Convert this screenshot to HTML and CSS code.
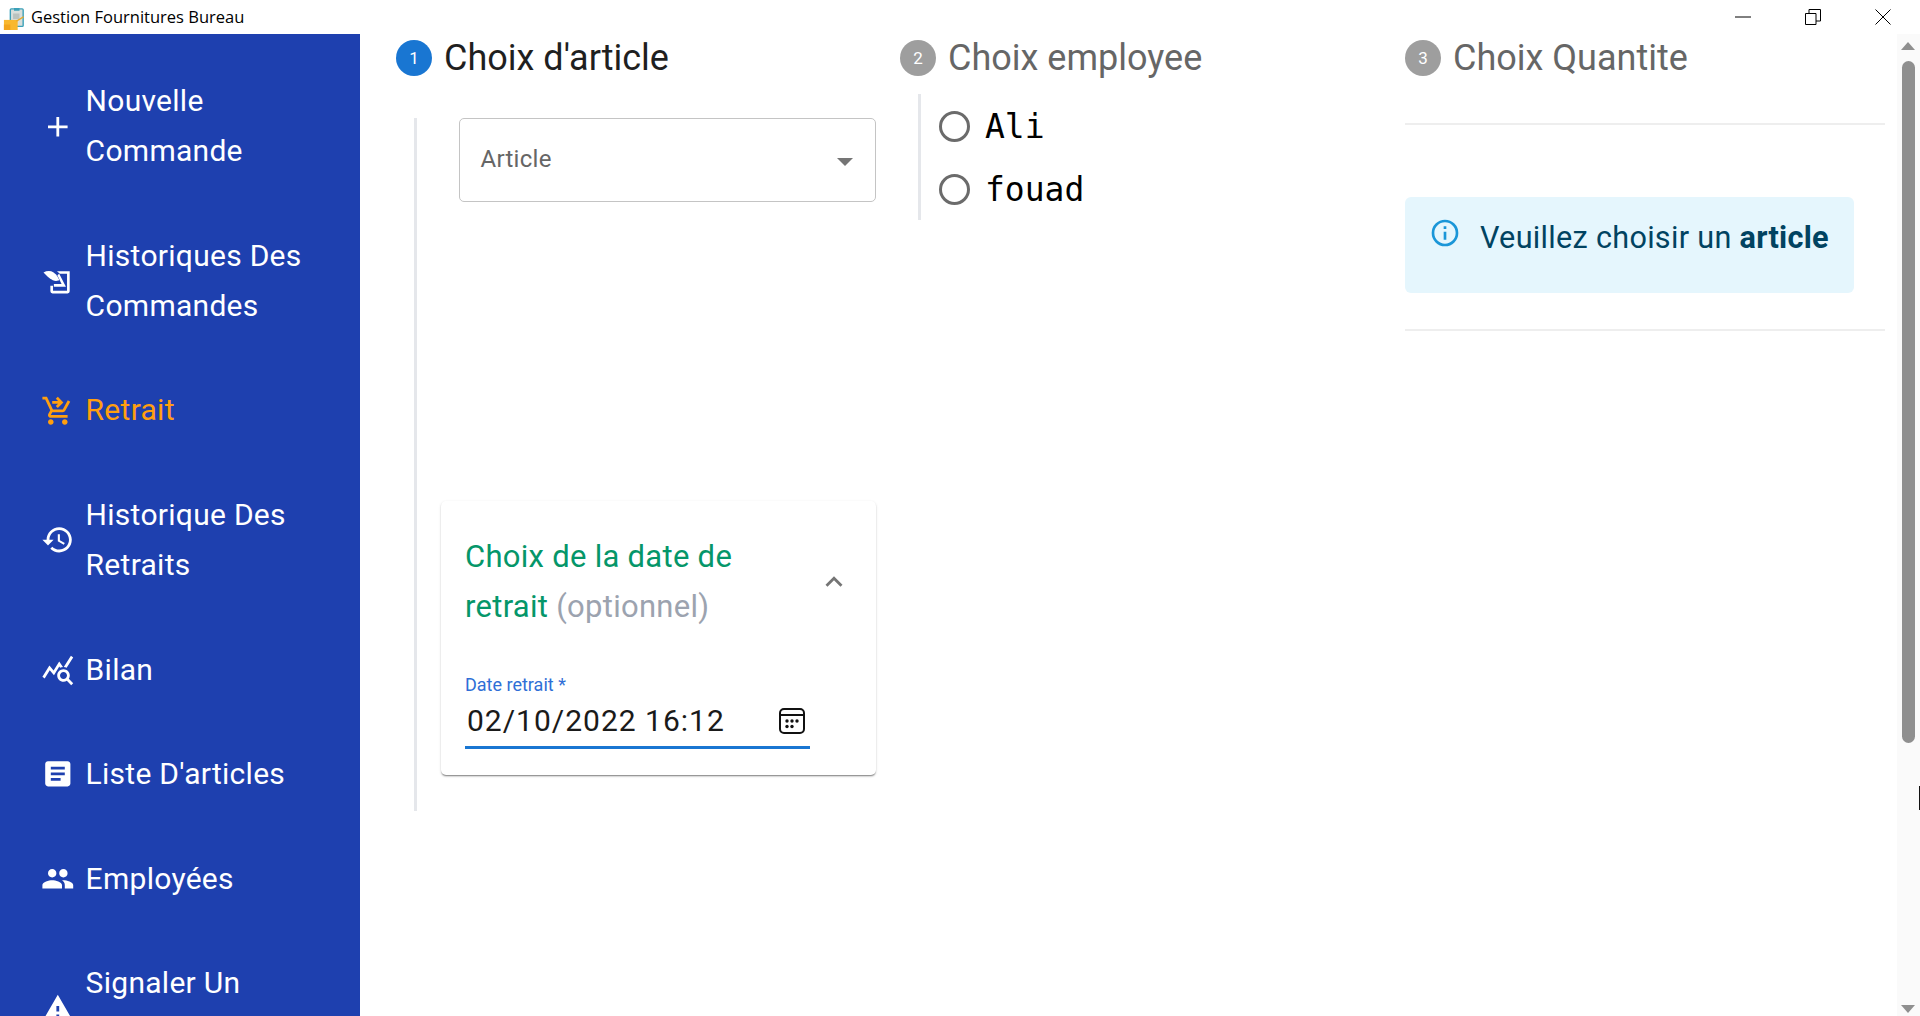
FILE: index.html
```html
<!DOCTYPE html>
<html lang="fr">
<head>
    <meta charset="UTF-8">
    <title>Gestion Fournitures Bureau</title>
    <link rel="stylesheet" href="styles.css">
</head>
<body>
    <header class="titlebar">
        <svg class="app-icon" viewBox="0 0 24 24">
            <rect x="8" y="1" width="14" height="19" rx="1" fill="#d8dedb" stroke="#3aa0b8" stroke-width="1.5"/>
            <rect x="12" y="0" width="6" height="3" fill="#3aa0b8"/>
            <rect x="11" y="6" width="7" height="6" fill="#b9c2bf"/>
            <rect x="1" y="13" width="15" height="11" fill="#f9b82e"/>
            <rect x="1" y="18" width="7" height="6" fill="#f3a51c"/>
            <path d="M14 14l8-5 1 1-8 5z" fill="#e8a928"/>
        </svg>
        <span class="app-title">Gestion Fournitures Bureau</span>
        <div class="win-controls">
            <svg width="16" height="16" viewBox="0 0 16 16"><path d="M0 8h16" stroke="#000" fill="none"/></svg>
            <svg width="16" height="16" viewBox="0 0 16 16"><path d="M.5 4.5h10.500v11H.5zM4 4.500V.5h11.500V12H11" stroke="#000" fill="none"/></svg>
            <svg width="16" height="16" viewBox="0 0 16 16"><path d="M.5.5l15 15M15.500.5l-15 15" stroke="#000" fill="none"/></svg>
        </div>
    </header>

    <div class="app">
        <nav class="sidebar">
            <a class="nav-item">
                <svg class="nav-icon" viewBox="0 0 24 24"><path d="M19 13h-6v6h-2v-6H5v-2h6V5h2v6h6v2z"/></svg>
                <span>Nouvelle Commande</span>
            </a>
            <a class="nav-item">
                <svg class="nav-icon" viewBox="0 0 24 24"><path d="M11.400 5.100h9.100v14.400q0 1.500-1.500 1.500H8.200q-1.500 0-1.500-1.500V15.500h1.900v3.600h10V7h-5.100z"/><path d="M1.800 6C5.500 3.900 9.500 5 11.800 9l1.400 2.600-2.500.6C7.800 11.800 4.500 9 1.800 6z"/><path d="M13 7l4.800 9.200H9.200v-1.900h5.500l-3-6.300z"/></svg>
                <span>Historiques Des Commandes</span>
            </a>
            <a class="nav-item active">
                <svg class="nav-icon" viewBox="0 0 24 24"><path d="M15.550 13c.75 0 1.410-.41 1.750-1.030l3.580-6.490-1.740-.96L15.550 11H8.530L4.270 2H1v2h2l3.600 7.590-1.350 2.440C4.520 15.370 5.480 17 7 17h12v-2H7l1.100-2h7.450zM7 18c-1.100 0-1.990.9-1.990 2S5.900 22 7 22s2-.9 2-2-.9-2-2-2zm10 0c-1.100 0-1.990.9-1.990 2s.89 2 1.990 2 2-.9 2-2-.9-2-2-2z"/><path d="M12 2l-1.410 1.410L12.170 5H8v2h4.170l-1.580 1.590L12 10l4-4-4-4z"/></svg>
                <span>Retrait</span>
            </a>
            <a class="nav-item">
                <svg class="nav-icon" viewBox="0 0 24 24"><path d="M13 3c-4.970 0-9 4.030-9 9H1l3.890 3.890.07.14L9 12H6c0-3.870 3.130-7 7-7s7 3.130 7 7-3.130 7-7 7c-1.930 0-3.680-.79-4.940-2.060l-1.420 1.420C8.270 19.990 10.510 21 13 21c4.970 0 9-4.030 9-9s-4.030-9-9-9zm-1 5v5l4.280 2.540.72-1.210-3.500-2.080V8H12z"/></svg>
                <span>Historique Des Retraits</span>
            </a>
            <a class="nav-item">
                <svg class="nav-icon" viewBox="0 0 24 24"><path d="M19.880 18.470c.44-.7.7-1.510.7-2.390 0-2.490-2.010-4.500-4.500-4.500s-4.500 2.010-4.500 4.500 2.010 4.500 4.490 4.500c.88 0 1.700-.26 2.390-.7L21.580 23 23 21.580l-3.120-3.110zm-3.800.11c-1.380 0-2.500-1.120-2.500-2.500s1.120-2.500 2.500-2.500 2.500 1.120 2.500 2.500-1.120 2.500-2.500 2.500zm-.36-8.500c-.74.02-1.450.18-2.100.45l-.55-.83-3.800 6.180-3.010-3.520-3.630 5.810L1 17l5-8 3 3.500L13 6l2.720 4.080zm2.590.5c-.64-.28-1.330-.45-2.050-.49L21.380 2 23 3.180l-4.690 7.400z"/></svg>
                <span>Bilan</span>
            </a>
            <a class="nav-item">
                <svg class="nav-icon" viewBox="0 0 24 24"><path d="M19 3H5c-1.100 0-2 .9-2 2v14c0 1.100.9 2 2 2h14c1.100 0 2-.9 2-2V5c0-1.100-.9-2-2-2zm-5 14H7v-2h7v2zm3-4H7v-2h10v2zm0-4H7V7h10v2z"/></svg>
                <span>Liste D'articles</span>
            </a>
            <a class="nav-item">
                <svg class="nav-icon" viewBox="0 0 24 24"><path d="M16 11c1.660 0 2.990-1.340 2.990-3S17.660 5 16 5c-1.660 0-3 1.340-3 3s1.340 3 3 3zm-8 0c1.660 0 2.990-1.340 2.990-3S9.660 5 8 5C6.340 5 5 6.340 5 8s1.340 3 3 3zm0 2c-2.330 0-7 1.170-7 3.500V19h14v-2.500c0-2.330-4.670-3.500-7-3.500zm8 0c-.29 0-.62.02-.97.05 1.160.84 1.970 1.970 1.970 3.450V19h6v-2.500c0-2.330-4.670-3.500-7-3.500z"/></svg>
                <span>Employées</span>
            </a>
            <a class="nav-item">
                <svg class="nav-icon" viewBox="0 0 24 24"><path d="M1 21h22L12 2 1 21zm12-3h-2v-2h2v2zm0-4h-2v-4h2v4z"/></svg>
                <span>Signaler Un Problème</span>
            </a>
        </nav>

        <main class="steps">
            <section class="step">
                <div class="step-head">
                    <span class="step-num current">1</span>
                    <h2 class="step-title current">Choix d'article</h2>
                </div>
                <div class="step-body article-body">
                    <div class="select">
                        <span class="select-text">Article</span>
                        <span class="select-arrow"></span>
                    </div>
                    <div class="card">
                        <div class="card-head">
                            <div class="card-title">Choix de la date de retrait <span class="optional">(optionnel)</span></div>
                            <svg class="chevron" viewBox="0 0 24 24"><path d="M12 8l-6 6 1.410 1.410L12 10.830l4.590 4.580L18 14z"/></svg>
                        </div>
                        <div class="date-field">
                            <label class="date-label">Date retrait *</label>
                            <div class="date-input">
                                <span>02/10/2022 16:12</span>
                                <svg class="calendar" viewBox="0 0 26 26" fill="none" stroke="#111" stroke-width="2">
                                    <rect x="1" y="1" width="24" height="24" rx="4"/>
                                    <path d="M1 7h24"/>
                                    <g fill="#111" stroke="none">
                                        <circle cx="8" cy="13" r="1.700"/><circle cx="13" cy="13" r="1.700"/><circle cx="18" cy="13" r="1.700"/>
                                        <circle cx="8" cy="18.500" r="1.700"/><circle cx="13" cy="18.500" r="1.700"/>
                                    </g>
                                </svg>
                            </div>
                        </div>
                    </div>
                </div>
            </section>

            <section class="step">
                <div class="step-head">
                    <span class="step-num">2</span>
                    <h2 class="step-title">Choix employee</h2>
                </div>
                <div class="step-body employee-body">
                    <div class="radio-row"><span class="radio"></span><span class="radio-label">Ali</span></div>
                    <div class="radio-row"><span class="radio"></span><span class="radio-label">fouad</span></div>
                </div>
            </section>

            <section class="step">
                <div class="step-head">
                    <span class="step-num">3</span>
                    <h2 class="step-title">Choix Quantite</h2>
                </div>
                <div class="quantity-body">
                    <div class="alert">
                        <svg class="alert-icon" viewBox="0 0 24 24"><path d="M11 9h2V7h-2m1 13c-4.410 0-8-3.590-8-8s3.590-8 8-8 8 3.590 8 8-3.590 8-8 8m0-18A10 10 0 0 0 2 12a10 10 0 0 0 10 10 10 10 0 0 0 10-10A10 10 0 0 0 12 2m-1 15h2v-6h-2v6z"/></svg>
                        <div>Veuillez choisir un <strong>article</strong></div>
                    </div>
                </div>
            </section>
        </main>

        <div class="scrollbar">
            <span class="arrow-up"></span>
            <span class="thumb"></span>
            <span class="arrow-down"></span>
        </div>
    </div>
    <span class="cursor-mark"></span>
</body>
</html>
```

FILE: styles.css
```css
* {
    box-sizing: border-box;
}

html, body {
    height: 100%;
}

body {
    margin: 0;
    display: flex;
    flex-direction: column;
    overflow: hidden;
    background: #ffffff;
    font-family: Roboto, Arial, sans-serif;
    font-size: 30px;
    line-height: 50px;
    letter-spacing: 0.28px;
}

/* window title bar */
.titlebar {
    display: flex;
    align-items: center;
    flex: 0 0 34px;
    padding-left: 3px;
    background: #ffffff;
}

.app-icon {
    width: 22px;
    height: 24px;
    margin-top: 4px;
}

.app-title {
    margin-left: 6px;
    font-family: "Open Sans", "Noto Sans", sans-serif;
    font-size: 16.500px;
    line-height: 20px;
    letter-spacing: 0;
    color: #000000;
}

.win-controls {
    display: flex;
    gap: 54px;
    margin-left: auto;
    margin-right: 29px;
}

/* sidebar */
.app {
    display: flex;
    flex: 1;
    min-height: 0;
}

.sidebar {
    flex: 0 0 360px;
    padding-top: 15px;
    background: #1e40af;
    color: #ffffff;
    overflow: hidden;
}

.nav-item {
    display: flex;
    align-items: center;
    gap: 11px;
    padding: 27.300px 30px 27.300px 41px;
}

.nav-item.active {
    color: #ff9f0f;
}

.nav-icon {
    flex: 0 0 33.600px;
    width: 33.600px;
    height: 33.600px;
    fill: currentColor;
}

/* stepper */
.steps {
    flex: 1;
    display: grid;
    grid-template-columns: 504px 505px 1fr;
    padding: 6px 12px 0 36px;
    min-width: 0;
}

.step-head {
    display: flex;
    align-items: center;
    gap: 12px;
    height: 36px;
}

.step-num {
    display: flex;
    align-items: center;
    justify-content: center;
    width: 36px;
    height: 36px;
    border-radius: 50%;
    background: #9e9e9e;
    color: #ffffff;
    font-size: 17px;
    line-height: 1;
    letter-spacing: 0;
}

.step-num.current {
    background: #1976d2;
}

.step-title {
    margin: 0;
    font-size: 36px;
    font-weight: 400;
    line-height: 36px;
    letter-spacing: 0;
    color: #666666;
}

.step-title.current {
    color: #1f1f1f;
}

.step-body {
    margin-left: 18px;
    border-left: 3px solid #e5e7eb;
}

.article-body {
    width: 462px;
    height: 693px;
    margin-top: 42px;
    padding-left: 42px;
}

.select {
    display: flex;
    align-items: center;
    justify-content: space-between;
    height: 84px;
    padding: 0 20px 0 20.500px;
    border: 1.500px solid #c4c4c4;
    border-radius: 5px;
    font-size: 24px;
    color: #666666;
}

.select-text {
    margin-bottom: 2px;
}

.select-arrow {
    width: 0;
    height: 0;
    border-left: 8px solid transparent;
    border-right: 8px solid transparent;
    border-top: 8px solid #757575;
    margin-top: 3px;
    margin-right: 2px;
}

.card {
    height: 274px;
    margin: 299px 0 0 -18px;
    padding: 31px 0 0 24px;
    border-radius: 5px;
    background: #ffffff;
    box-shadow: 0 2px 2px -1px rgba(0, 0, 0, 0.35), 0 1px 1px 0 rgba(0, 0, 0, 0.14), 0 1px 3px 0 rgba(0, 0, 0, 0.12);
}

.card-head {
    display: flex;
    align-items: center;
}

.card-title {
    flex: 0 0 325px;
    font-size: 31px;
    color: #059669;
}

.optional {
    color: #9ca3af;
}

.chevron {
    width: 34px;
    height: 34px;
    margin-left: 27px;
    fill: #757575;
}

.date-field {
    margin-top: 41px;
    width: 345px;
}

.date-label {
    display: block;
    font-size: 18px;
    line-height: 24px;
    letter-spacing: 0;
    color: #2f6fd6;
}

.date-input {
    display: flex;
    align-items: center;
    justify-content: space-between;
    height: 52px;
    padding: 0 5px 2px 2px;
    border-bottom: 3px solid #1976d2;
    font-size: 30px;
    line-height: 48px;
    letter-spacing: 1px;
    color: #1a1a1a;
}

.calendar {
    width: 26px;
    height: 26px;
}

.employee-body {
    display: flex;
    flex-direction: column;
    gap: 13px;
    width: 300px;
    height: 126px;
    margin-top: 18px;
    padding: 7px 0 0 18px;
}

.radio-row {
    display: flex;
    align-items: center;
    gap: 15px;
    height: 50px;
}

.radio {
    width: 31px;
    height: 31px;
    border: 3px solid #6b6b6b;
    border-radius: 50%;
}

.radio-label {
    font-family: "DejaVu Sans Mono", "Liberation Mono", monospace;
    font-size: 33px;
    letter-spacing: 0;
    color: #000000;
    margin-top: 2px;
}

.quantity-body {
    margin-top: 47px;
    padding: 72px 0 36px;
    border-top: 2px solid #eeeeee;
    border-bottom: 2px solid #eeeeee;
}

.alert {
    display: flex;
    align-items: flex-start;
    width: 449px;
    height: 96px;
    padding: 16px 24px;
    border-radius: 6px;
    background: #e5f6fd;
    color: #014361;
    font-size: 30.600px;
    letter-spacing: 0.3px;
}

.alert-icon {
    flex: 0 0 32px;
    width: 32px;
    height: 32px;
    margin-top: 4px;
    margin-right: 19px;
    fill: #1a96d8;
}

.alert strong {
    font-weight: 700;
}

/* scrollbar */
.scrollbar {
    position: relative;
    flex: 0 0 23px;
    background: #fafafa;
}

.thumb {
    position: absolute;
    left: 5px;
    top: 27px;
    width: 13px;
    height: 682px;
    border-radius: 7px;
    background: #8f8f8f;
}

.arrow-up, .arrow-down {
    position: absolute;
    left: 4px;
    width: 0;
    height: 0;
    border-left: 7.500px solid transparent;
    border-right: 7.500px solid transparent;
}

.arrow-up {
    top: 8px;
    border-bottom: 8px solid #8f8f8f;
}

.arrow-down {
    bottom: 3px;
    border-top: 8px solid #8f8f8f;
}

.cursor-mark {
    position: absolute;
    left: 1919px;
    top: 786px;
    width: 1px;
    height: 24px;
    background: #111111;
}
```
